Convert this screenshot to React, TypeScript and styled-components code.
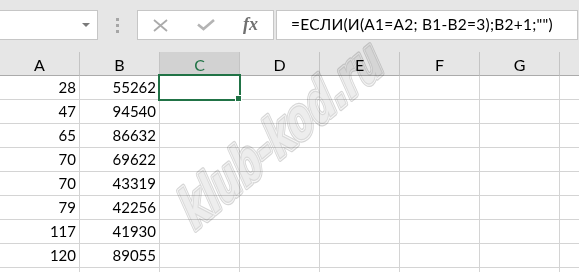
import React from 'react';
import styled, { createGlobalStyle } from 'styled-components';

const GlobalStyle = createGlobalStyle`
    html, body {
        margin: 0;
        padding: 0;
        background: #e6e6e6;
        overflow: hidden;
    }
    body {
        font-family: Lato, "Noto Sans", sans-serif;
    }
`;

const Window = styled.div`
    position: relative;
    width: 579px;
    height: 272px;
    overflow: hidden;
    background: #e6e6e6;
`;

const FormulaBar = styled.div`
    display: flex;
    align-items: flex-start;
    height: 52px;
    padding-top: 10px;
    box-sizing: border-box;
`;

const NameBox = styled.div`
    display: flex;
    align-items: center;
    justify-content: flex-end;
    margin-left: -10px;
    width: 108px;
    height: 30px;
    padding-right: 7px;
    box-sizing: border-box;
    background: #fff;
    border: 1px solid #c6c6c6;
`;

const DropArrow = styled.span`
    width: 0;
    height: 0;
    border-left: 4px solid transparent;
    border-right: 4px solid transparent;
    border-top: 4px solid #7a7a7a;
`;

const Grip = styled.div`
    display: flex;
    flex-direction: column;
    gap: 3px;
    margin: 8px 0 0 18px;
`;

const GripDot = styled.span`
    width: 3px;
    height: 3px;
    background: #a6a6a6;
`;

const FxGroup = styled.div`
    display: flex;
    margin-left: 18px;
    width: 137px;
    height: 30px;
    box-sizing: border-box;
    background: #fff;
    border: 1px solid #c6c6c6;
`;

const FxSlot = styled.div`
    display: flex;
    align-items: center;
    justify-content: center;
    width: 45px;
`;

const FxText = styled.span`
    font-family: "Liberation Serif", serif;
    font-style: italic;
    font-weight: bold;
    font-size: 18px;
    color: #707070;
    margin-top: -1px;
`;

const FormulaInput = styled.div`
    margin-left: 2px;
    width: 302px;
    height: 30px;
    padding-left: 14px;
    box-sizing: border-box;
    background: #fff;
    border: 1px solid #c6c6c6;
    font-size: 15.5px;
    letter-spacing: 0.25px;
    line-height: 27px;
    color: #000;
    white-space: nowrap;
`;

const Sheet = styled.div`
    display: grid;
    grid-template-columns: repeat(8, 80px);
    grid-auto-rows: 24px;
`;

const HeaderCell = styled.div<{ $active?: boolean }>`
    display: flex;
    align-items: center;
    justify-content: center;
    box-sizing: border-box;
    padding-top: 1px;
    background: ${p => (p.$active ? '#d2d2d2' : '#e6e6e6')};
    color: ${p => (p.$active ? '#217346' : '#000')};
    border-right: 1px solid #c4c4c4;
    border-bottom: 1px solid ${p => (p.$active ? '#217346' : '#ababab')};
    font-size: 16px;
`;

const Cell = styled.div`
    position: relative;
    box-sizing: border-box;
    padding-right: 3px;
    background: #fff;
    border-right: 1px solid #d4d4d4;
    border-bottom: 1px solid #d4d4d4;
    font-size: 15px;
    line-height: 23px;
    text-align: right;
    color: #000;
`;

const Selection = styled.div`
    position: absolute;
    left: -2px;
    top: -2px;
    width: 83px;
    height: 27px;
    box-sizing: border-box;
    border: 2px solid #217346;
    z-index: 2;
`;

const FillHandle = styled.span`
    position: absolute;
    right: -3px;
    bottom: -3px;
    width: 5px;
    height: 5px;
    background: #217346;
    border: 1px solid #fff;
`;

const Watermark = styled.svg`
    position: absolute;
    left: 0;
    top: 0;
    pointer-events: none;
    mix-blend-mode: multiply;
    z-index: 3;
`;

const columns = ['A', 'B', 'C', 'D', 'E', 'F', 'G', 'H'];
// the H column is cut at the window edge, its letter falls outside
const visibleLabels = 7;

const rows: [number, number][] = [
    [28, 55262],
    [47, 94540],
    [65, 86632],
    [70, 69622],
    [70, 43319],
    [79, 42256],
    [117, 41930],
    [120, 89055]
];

function CancelIcon() {
    return (
        <svg width="17" height="13" viewBox="0 0 17 13">
            <path d="M2 1 L15 12 M15 1 L2 12" stroke="#ababab" strokeWidth="1.8" fill="none" />
        </svg>
    );
}

function EnterIcon() {
    return (
        <svg width="18" height="12" viewBox="0 0 18 12">
            <path d="M1 5.5 L6.5 10 L17 1" stroke="#b4b4b4" strokeWidth="2.6" fill="none" />
        </svg>
    );
}

const wmText = 'klub-kod.ru';

function WatermarkLayer() {
    const common = {
        x: 0,
        y: 0,
        fontFamily: '"DejaVu Sans Condensed", "DejaVu Sans", sans-serif',
        fontWeight: 'bold',
        fontSize: 43
    };
    // rotated baseline, sheared and stretched glyphs like the stamped logo
    return (
        <Watermark width="579" height="272">
            <g transform="matrix(0.766 -0.643 0.529 1.188 193 232)">
                <text {...common} fill="none" stroke="#d6d6d6" strokeWidth="4.5" strokeLinejoin="round">
                    {wmText}
                </text>
                <text {...common} fill="none" stroke="#f7f7f7" strokeWidth="2.6" strokeLinejoin="round">
                    {wmText}
                </text>
                <text {...common} fill="#ededed" stroke="#d9d9d9" strokeWidth="0.9">
                    {wmText}
                </text>
            </g>
        </Watermark>
    );
}

export default function App() {
    return (
        <Window>
            <GlobalStyle />
            <FormulaBar>
                <NameBox>
                    <DropArrow />
                </NameBox>
                <Grip>
                    <GripDot />
                    <GripDot />
                    <GripDot />
                </Grip>
                <FxGroup>
                    <FxSlot>
                        <CancelIcon />
                    </FxSlot>
                    <FxSlot>
                        <EnterIcon />
                    </FxSlot>
                    <FxSlot>
                        <FxText>fx</FxText>
                    </FxSlot>
                </FxGroup>
                <FormulaInput>=ЕСЛИ(И(А1=А2; В1-В2=3);В2+1;"")</FormulaInput>
            </FormulaBar>
            <Sheet>
                {columns.map((c, j) => (
                    <HeaderCell key={c} $active={c === 'C'}>
                        {j < visibleLabels ? c : ''}
                    </HeaderCell>
                ))}
                {[...rows, null].map((r, i) =>
                    columns.map((c, j) => (
                        <Cell key={`${i}-${c}`}>
                            {r && j < 2 ? r[j] : ''}
                            {i === 0 && c === 'C' && (
                                <Selection>
                                    <FillHandle />
                                </Selection>
                            )}
                        </Cell>
                    ))
                )}
            </Sheet>
            <WatermarkLayer />
        </Window>
    );
}
